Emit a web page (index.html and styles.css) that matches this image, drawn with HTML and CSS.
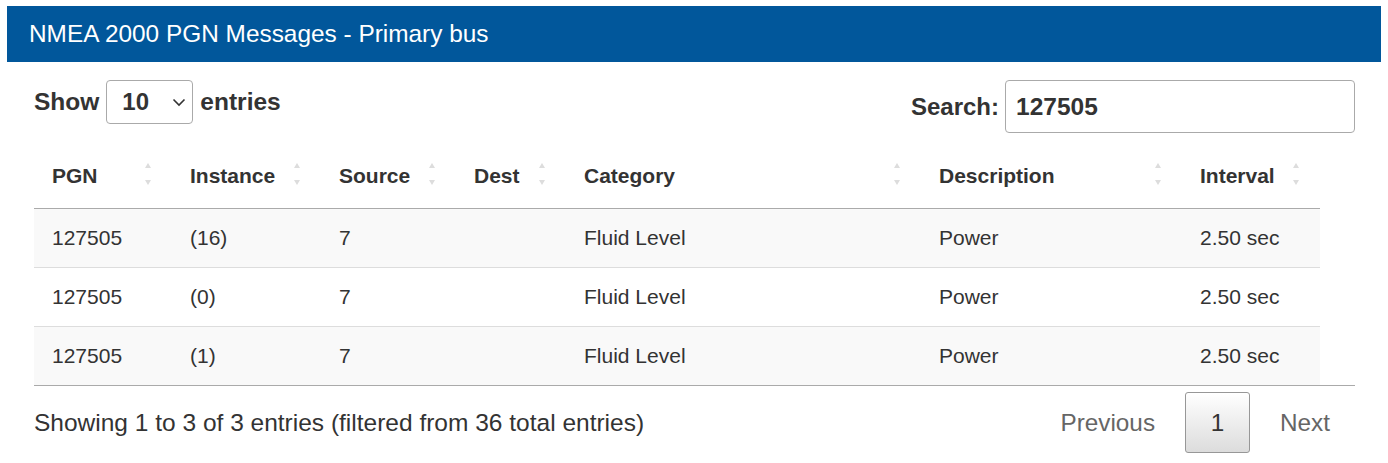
FILE: index.html
```html
<!DOCTYPE html>
<html lang="en">
<head>
    <meta charset="UTF-8">
    <meta name="viewport" content="width=device-width, initial-scale=1.0">
    <title>NMEA 2000 PGN Messages</title>
    <link rel="stylesheet" href="styles.css">
</head>
<body>
    <div class="panel">
        <div class="panel-heading">NMEA 2000 PGN Messages - Primary bus</div>
        <div class="panel-body">
            <div class="controls">
                <label class="length">Show
                    <span class="select">10
                        <svg width="14" height="9" viewBox="0 0 14 9"><path d="M1.5 1.5 L7 7 L12.5 1.5" fill="none" stroke="#333" stroke-width="1.6"/></svg>
                    </span>
                    entries</label>
                <label class="filter">Search: <span class="search">127505</span></label>
            </div>

            <div class="scroll-body">
                <table class="pgn-table">
                    <thead>
                        <tr>
                            <th class="col-pgn">PGN<span class="sort"></span></th>
                            <th class="col-instance">Instance<span class="sort"></span></th>
                            <th class="col-source">Source<span class="sort"></span></th>
                            <th class="col-dest">Dest<span class="sort"></span></th>
                            <th class="col-category">Category<span class="sort"></span></th>
                            <th class="col-description">Description<span class="sort"></span></th>
                            <th class="col-interval">Interval<span class="sort"></span></th>
                        </tr>
                    </thead>
                    <tbody>
                        <tr class="odd">
                            <td>127505</td><td>(16)</td><td>7</td><td></td><td>Fluid Level</td><td>Power</td><td>2.50 sec</td>
                        </tr>
                        <tr>
                            <td>127505</td><td>(0)</td><td>7</td><td></td><td>Fluid Level</td><td>Power</td><td>2.50 sec</td>
                        </tr>
                        <tr class="odd">
                            <td>127505</td><td>(1)</td><td>7</td><td></td><td>Fluid Level</td><td>Power</td><td>2.50 sec</td>
                        </tr>
                    </tbody>
                </table>
            </div>

            <div class="table-footer">
                <div class="info">Showing 1 to 3 of 3 entries (filtered from 36 total entries)</div>
                <div class="paginate">
                    <span class="page-btn disabled">Previous</span>
                    <span class="page-btn current">1</span>
                    <span class="page-btn disabled next">Next</span>
                </div>
            </div>
        </div>
    </div>
</body>
</html>
```

FILE: styles.css
```css
body {
    margin: 0;
    padding: 6px 7px;
    font-family: 'Liberation Sans', Arial, sans-serif;
    font-size: 21px;
    color: #333;
    background-color: #fff;
}

.panel-heading {
    background-color: #01579b;
    color: #fff;
    height: 56px;
    box-sizing: border-box;
    padding: 0 22px;
    display: flex;
    align-items: center;
    font-size: 24.4px;
}

.panel-body {
    padding: 18px 26px 0 27px;
}

.controls {
    display: flex;
    justify-content: space-between;
    align-items: flex-start;
    height: 67px;
}

.length {
    display: flex;
    align-items: center;
    gap: 7px;
    font-weight: bold;
    font-size: 24.5px;
    height: 44px;
}

.select {
    display: flex;
    align-items: center;
    justify-content: space-between;
    width: 87px;
    height: 44px;
    box-sizing: border-box;
    padding: 0 6px 0 15px;
    border: 1px solid #aaa;
    border-radius: 4px;
    font-size: 24px;
}

.filter {
    display: flex;
    align-items: center;
    gap: 6px;
    font-weight: bold;
    font-size: 24px;
}

.search {
    display: flex;
    align-items: center;
    width: 350px;
    height: 53px;
    box-sizing: border-box;
    padding: 0 10px;
    border: 1px solid #aaa;
    border-radius: 4px;
    font-size: 24.5px;
}

.scroll-body {
    border-bottom: 1px solid #aaa;
}

.pgn-table {
    width: 1286px;
    border-collapse: collapse;
    table-layout: fixed;
}

.pgn-table th {
    position: relative;
    text-align: left;
    font-weight: bold;
    height: 61px;
    padding: 0 18px 2px;
    box-sizing: border-box;
    border-bottom: 1px solid #aaa;
}

.pgn-table td {
    height: 59px;
    padding: 0 18px;
    box-sizing: border-box;
    border-top: 1px solid #ddd;
}

.pgn-table tbody tr:first-child td {
    border-top: none;
}

.pgn-table tr.odd td {
    background-color: #f9f9f9;
}

.col-pgn { width: 138px; }
.col-instance { width: 149px; }
.col-source { width: 135px; }
.col-dest { width: 110px; }
.col-category { width: 355px; }
.col-description { width: 261px; }
.col-interval { width: 138px; }

/* sort arrows, drawn as two faded triangles */
.sort {
    position: absolute;
    right: 20px;
    top: 16px;
    width: 7px;
    height: 22px;
}

.sort::before,
.sort::after {
    content: "";
    position: absolute;
    left: 0;
    border-left: 3.5px solid transparent;
    border-right: 3.5px solid transparent;
}

.sort::before {
    top: 0;
    border-bottom: 5px solid #ddd;
}

.sort::after {
    bottom: 0;
    border-top: 5px solid #ddd;
}

.table-footer {
    display: flex;
    justify-content: space-between;
    align-items: center;
    padding-top: 6px;
}

.info {
    font-size: 24.5px;
}

.paginate {
    display: flex;
    align-items: center;
}

.page-btn {
    display: flex;
    align-items: center;
    justify-content: center;
    height: 61px;
    box-sizing: border-box;
    padding: 0 26px;
    font-size: 24.3px;
    color: #666;
    border: 1px solid transparent;
    border-radius: 3px;
}

.page-btn.next {
    padding-right: 24px;
}

.page-btn.current {
    width: 65px;
    padding: 0;
    margin: 0 3px;
    color: #333;
    border: 1px solid #979797;
    background: linear-gradient(to bottom, #fff 0%, #dcdcdc 100%);
}
```
